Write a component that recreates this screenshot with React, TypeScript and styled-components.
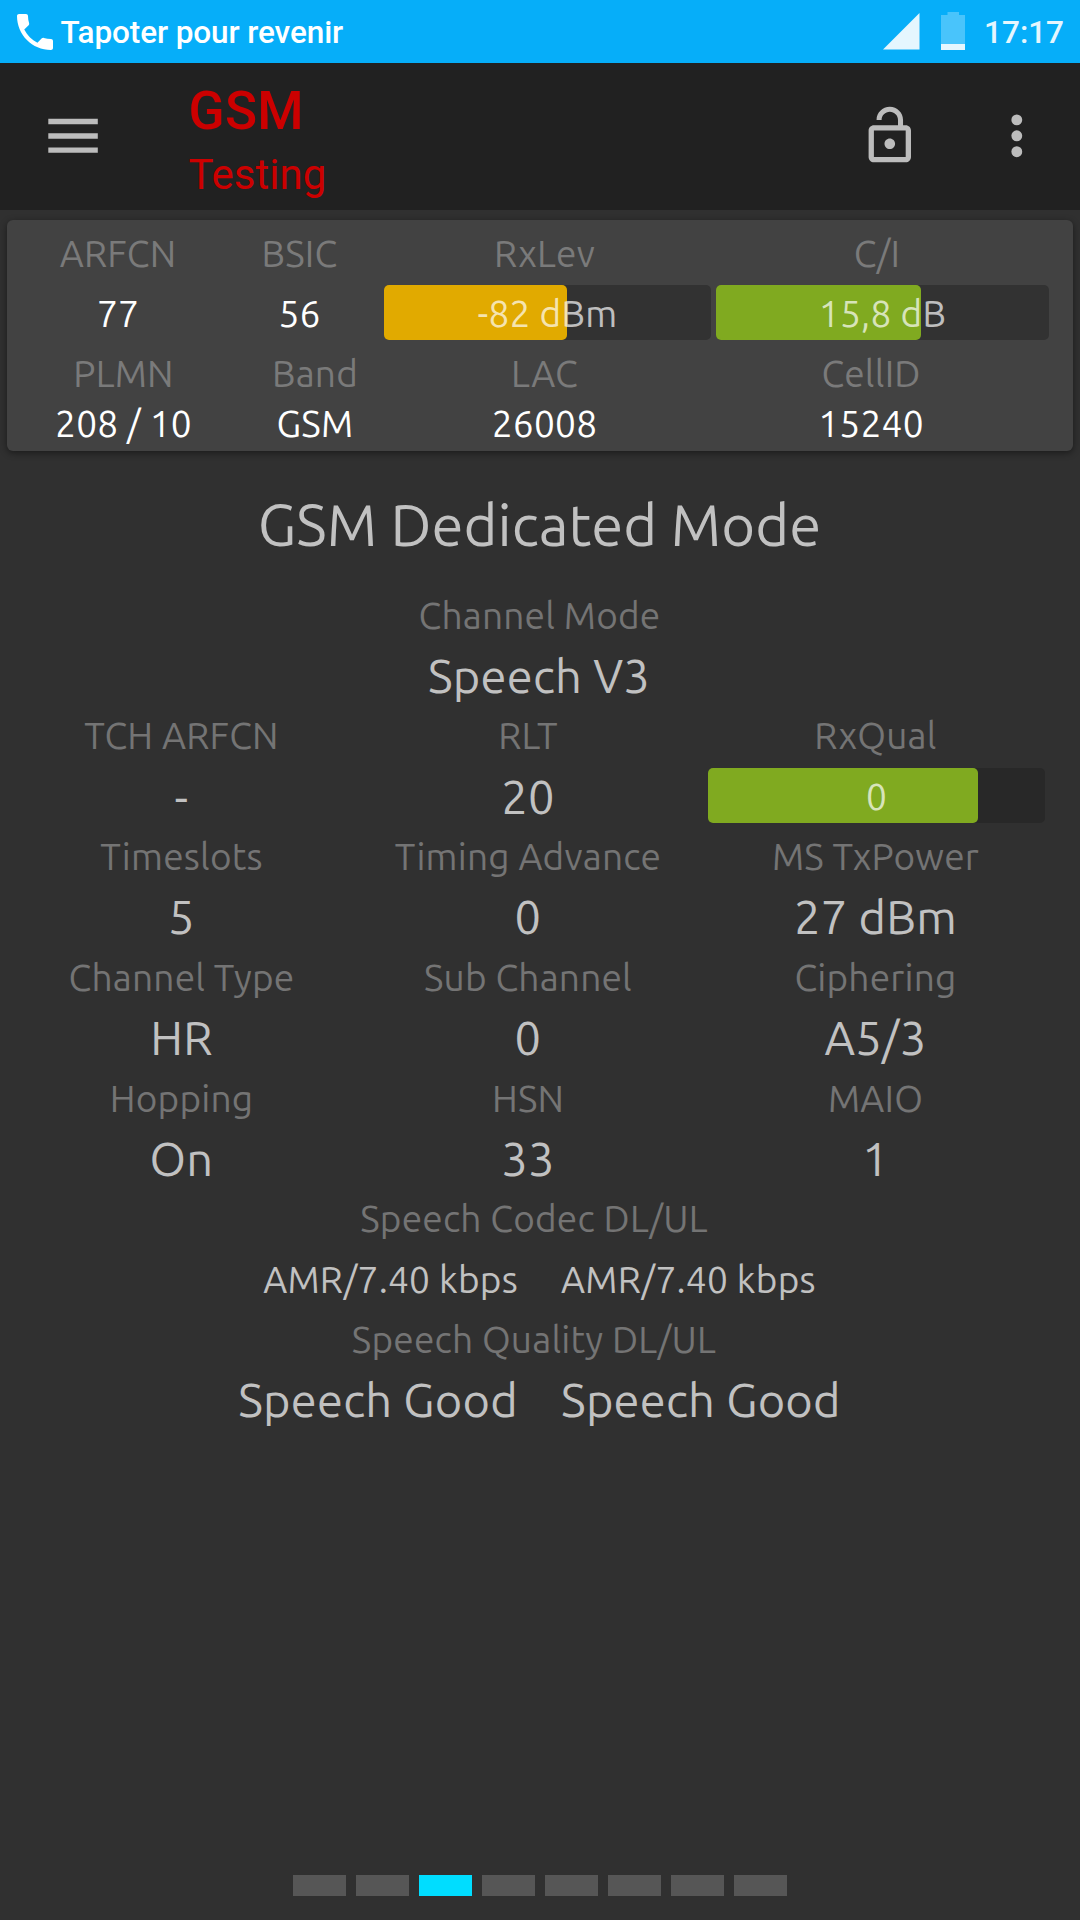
import React from "react";
import styled, { createGlobalStyle } from "styled-components";

const GlobalStyle = createGlobalStyle`
  *, *::before, *::after { box-sizing: border-box; }
  body { margin: 0; background: #303030; }
`;

const Screen = styled.div`
  width: 1080px;
  height: 1920px;
  display: flex;
  flex-direction: column;
  overflow: hidden;
  background: #303030;
  color: #c1c1c1;
  font-family: Ubuntu, "Noto Sans", "Open Sans", sans-serif;
`;

const StatusBar = styled.div`
  flex: none;
  height: 63px;
  display: flex;
  background: #06aef9;
  font-family: Roboto, sans-serif;
  font-size: 31.5px;
  font-weight: 500;
  line-height: 61px;
`;

const PhoneIcon = styled.svg`
  width: 48px;
  height: 48px;
  margin: 8px 0 0 10.5px;
  fill: #fff;
`;

const StatusText = styled.div`
  flex: 1;
  padding: 2px 0 0 2px;
  color: #fff;
  letter-spacing: -0.1px;
`;

const SignalIcon = styled.svg`
  width: 37px;
  height: 37px;
  margin: 13px 21px 0 0;
  fill: #e5f6fe;
`;

const BatteryIcon = styled.svg`
  width: 24px;
  height: 38px;
  margin: 12px 0 0;
`;

const Clock = styled.div`
  padding: 2px 16px 0 19px;
  color: #e5f6fe;
`;

const AppBar = styled.header`
  flex: none;
  height: 147px;
  display: flex;
  background: #212121;
  color: #bcbcbc;
`;

const MenuIcon = styled.svg`
  width: 66px;
  height: 66px;
  margin: 40px 82px 0 40px;
  fill: currentColor;
`;

const Titles = styled.div`
  flex: 1;
  padding: 18px 0 0 0.5px;
  color: #cc0000;
  font-family: Roboto, sans-serif;
`;

const Title = styled.div`
  font-size: 53px;
  font-weight: 500;
  line-height: 60px;
  letter-spacing: 0.3px;
`;

const Subtitle = styled.div`
  font-size: 42px;
  line-height: 67px;
`;

const ActionIcon = styled.svg<{ $right: number }>`
  width: 63.6px;
  height: 63.6px;
  margin: 41px ${(p) => p.$right}px 0 0;
  fill: currentColor;
`;

const Card = styled.section`
  flex: none;
  width: 1066px;
  height: 231px;
  margin: 10px 7px 0;
  padding-top: 1px;
  border-radius: 6px;
  background: #424242;
  box-shadow: 0 2px 7px rgba(0, 0, 0, 0.45);
`;

const CardRow = styled.div<{ $cols: string; $h: number }>`
  display: grid;
  grid-template-columns: ${(p) => p.$cols};
  height: ${(p) => p.$h}px;
  line-height: ${(p) => p.$h + 1}px;
`;

const Cell = styled.div`
  display: flex;
  justify-content: center;
  white-space: pre;
`;

const Label = styled.span<{ $card?: boolean }>`
  font-size: 37px;
  letter-spacing: 0.2px;
  color: ${(p) => (p.$card ? "#7a7a7a" : "#747474")};
`;

const Value = styled.span<{ $small?: boolean; $bright?: boolean }>`
  font-size: ${(p) => (p.$small ? 37 : 47)}px;
  letter-spacing: 0.25px;
  color: ${(p) => (p.$bright ? "#fff" : "#c1c1c1")};
`;

const Track = styled.div<{ $fill: number; $color: string; $w: number; $track: string; $m: string }>`
  display: grid;
  width: ${(p) => p.$w}px;
  height: 55px;
  margin: ${(p) => p.$m};
  line-height: 57px;
  border-radius: 5px;
  background: ${(p) => p.$track};

  &::before {
    content: "";
    grid-area: 1 / 1;
    width: ${(p) => p.$fill}px;
    height: 55px;
    border-radius: 5px;
    background: ${(p) => p.$color};
  }
`;

const TrackText = styled.span`
  grid-area: 1 / 1;
  z-index: 1;
  text-align: center;
  font-size: 37px;
  letter-spacing: 0.3px;
  color: rgba(255, 255, 255, 0.7);
`;

const Heading = styled.h1`
  flex: none;
  margin: 35px 0 22px;
  padding-right: 1px;
  text-align: center;
  font-size: 58px;
  font-weight: 400;
  line-height: 77px;
  letter-spacing: 0.07px;
`;

const Row = styled.div<{ $h?: number }>`
  flex: none;
  height: ${(p) => p.$h ?? 60}px;
  line-height: 61px;
`;

const Wide = styled(Row)<{ $pr?: number }>`
  display: flex;
  justify-content: center;
  padding-right: ${(p) => p.$pr ?? 0}px;
`;

const Thirds = styled(Row)`
  display: grid;
  grid-template-columns: 347px 346px 349px;
  padding-left: 8px;
`;

const Pair = styled(Row)`
  display: grid;
  grid-template-columns: 518px 1fr;
  column-gap: 43px;
  white-space: nowrap;

  & > :first-child {
    justify-self: end;
  }
  & > :last-child {
    justify-self: start;
  }
`;

const Pager = styled.nav`
  display: flex;
  justify-content: center;
  gap: 10.5px;
  margin: auto 0 24px;
`;

const PageMark = styled.span<{ $active: boolean }>`
  width: 52.5px;
  height: 21px;
  background: ${(p) => (p.$active ? "#00ddff" : "#565656")};
`;

const groups = [
  { labels: ["TCH ARFCN", "RLT", "RxQual"], values: ["-", "20"], labelHeight: 61, valueHeight: 60 },
  { labels: ["Timeslots", "Timing Advance", "MS TxPower"], values: ["5", "0", "27 dBm"], labelHeight: 60, valueHeight: 61 },
  { labels: ["Channel Type", "Sub Channel", "Ciphering"], values: ["HR", "0", "A5/3"], labelHeight: 60, valueHeight: 61 },
  { labels: ["Hopping", "HSN", "MAIO"], values: ["On", "33", "1"], labelHeight: 60, valueHeight: 60 },
];

const TOP_COLS = "222px 141px 349px 316px";
const BAR_COLS = "222px 141px 346px 340px";
const BOTTOM_COLS = "233px 150px 309px 344px";

const PAGES = 8;
const ACTIVE_PAGE = 2;

export default function App() {
  return (
    <>
      <GlobalStyle />
      <Screen>
        <StatusBar>
          <PhoneIcon viewBox="0 0 24 24">
            <path d="M6.62 10.79c1.44 2.83 3.76 5.14 6.59 6.59l2.2-2.2c.27-.27.67-.36 1.02-.24 1.12.37 2.33.57 3.57.57.55 0 1 .45 1 1V20c0 .55-.45 1-1 1C10.61 21 3 13.39 3 4c0-.55.45-1 1-1h3.5c.55 0 1 .45 1 1 0 1.25.2 2.45.57 3.57.11.35.03.74-.25 1.02l-2.2 2.2z" />
          </PhoneIcon>
          <StatusText>Tapoter pour revenir</StatusText>
          <SignalIcon viewBox="0 0 37 37">
            <path d="M0 36.5 36.5 0V36.5z" />
          </SignalIcon>
          <BatteryIcon viewBox="0 0 24 38">
            <path d="M6.5 0H18V3H24V32H0V3H6.5z" fill="#49c4fb" />
            <path d="M0 32H24V38H0z" fill="#e5f6fe" />
          </BatteryIcon>
          <Clock>17:17</Clock>
        </StatusBar>

        <AppBar>
          <MenuIcon viewBox="0 0 66 66">
            <path d="M8.3 15.7H57.8V21.3H8.3zM8.3 30.3H57.8V35.7H8.3zM8.3 44.4H57.8V49.8H8.3z" />
          </MenuIcon>
          <Titles>
            <Title>GSM</Title>
            <Subtitle>Testing</Subtitle>
          </Titles>
          <ActionIcon $right={62.8} viewBox="0 0 24 24">
            <path d="M12 17c1.1 0 2-.9 2-2s-.9-2-2-2-2 .9-2 2 .9 2 2 2zm6-9h-1V6c0-2.76-2.24-5-5-5S7 3.24 7 6h1.9c0-1.71 1.39-3.1 3.1-3.1 1.71 0 3.1 1.39 3.1 3.1v2H6c-1.1 0-2 .9-2 2v10c0 1.1.9 2 2 2h12c1.1 0 2-.9 2-2V10c0-1.1-.9-2-2-2zm0 12H6V10h12v10z" />
          </ActionIcon>
          <ActionIcon $right={31.8} viewBox="0 0 24 24">
            <circle cx="12" cy="6" r="2.05" />
            <circle cx="12" cy="12" r="2.05" />
            <circle cx="12" cy="18" r="2.05" />
          </ActionIcon>
        </AppBar>

        <Card>
          <CardRow $cols={TOP_COLS} $h={64}>
            {["ARFCN", "BSIC", "RxLev", "C/I"].map((text) => (
              <Cell key={text}>
                <Label $card>{text}</Label>
              </Cell>
            ))}
          </CardRow>
          <CardRow $cols={BAR_COLS} $h={56}>
            {["77", "56"].map((text) => (
              <Cell key={text}>
                <Value $small $bright>{text}</Value>
              </Cell>
            ))}
            <Track $w={327} $fill={183} $color="#e1aa00" $track="#323232" $m="0 0 0 14px">
              <TrackText>-82 dBm</TrackText>
            </Track>
            <Track $w={333} $fill={205} $color="#80aa20" $track="#323232" $m="0">
              <TrackText>15,8 dB</TrackText>
            </Track>
          </CardRow>
          <CardRow $cols={BOTTOM_COLS} $h={64}>
            {["PLMN", "Band", "LAC", "CellID"].map((text) => (
              <Cell key={text}>
                <Label $card>{text}</Label>
              </Cell>
            ))}
          </CardRow>
          <CardRow $cols={BOTTOM_COLS} $h={36}>
            {["208 / 10", "GSM", "26008", "15240"].map((text) => (
              <Cell key={text}>
                <Value $small $bright>{text}</Value>
              </Cell>
            ))}
          </CardRow>
        </Card>

        <Heading>GSM Dedicated Mode</Heading>

        <Wide $pr={1}>
          <Label>Channel Mode</Label>
        </Wide>
        <Wide $pr={2}>
          <Value>Speech V3</Value>
        </Wide>

        {groups.map((g, i) => (
          <React.Fragment key={i}>
            <Thirds $h={g.labelHeight}>
              {g.labels.map((text) => (
                <Cell key={text}>
                  <Label>{text}</Label>
                </Cell>
              ))}
            </Thirds>
            <Thirds $h={g.valueHeight}>
              {g.values.map((text, j) => (
                <Cell key={j}>
                  <Value>{text}</Value>
                </Cell>
              ))}
              {i === 0 && (
                <Track $w={337} $fill={270} $color="#80aa20" $track="#282828" $m="2px 0 0 7px">
                  <TrackText>0</TrackText>
                </Track>
              )}
            </Thirds>
          </React.Fragment>
        ))}

        <Wide $h={61} $pr={12}>
          <Label>Speech Codec DL/UL</Label>
        </Wide>
        <Pair>
          <Value $small>AMR/7.40 kbps</Value>
          <Value $small>AMR/7.40 kbps</Value>
        </Pair>
        <Wide $pr={12}>
          <Label>Speech Quality DL/UL</Label>
        </Wide>
        <Pair>
          <Value>Speech Good</Value>
          <Value>Speech Good</Value>
        </Pair>

        <Pager>
          {Array.from({ length: PAGES }, (_, i) => (
            <PageMark key={i} $active={i === ACTIVE_PAGE} />
          ))}
        </Pager>
      </Screen>
    </>
  );
}
